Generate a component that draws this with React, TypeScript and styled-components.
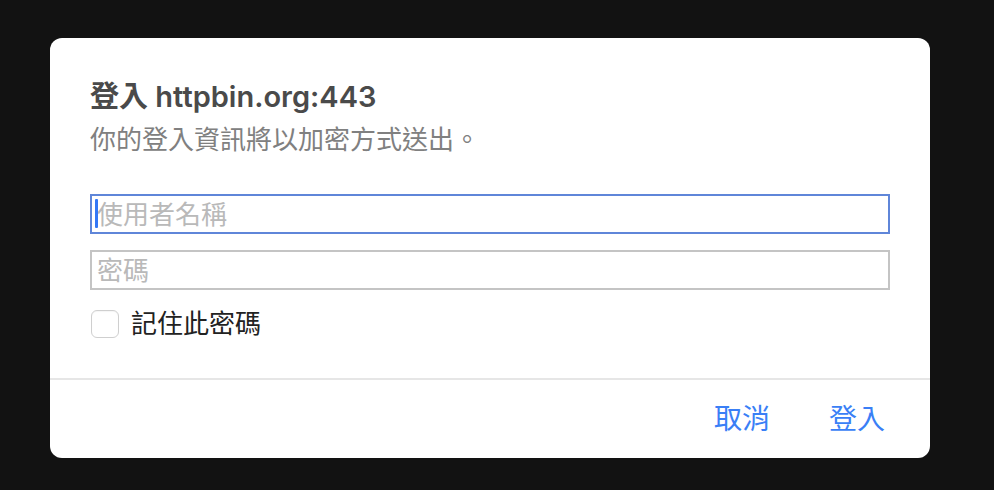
import styled, { createGlobalStyle } from 'styled-components'

const GlobalStyle = createGlobalStyle`
  html, body {
    margin: 0;
    padding: 0;
    background: #121212;
  }
  body {
    font-family: "Inter", "Noto Sans CJK TC", sans-serif;
  }
`

const Page = styled.div`
  width: 994px;
  height: 490px;
  padding: 38px 64px 0 50px;
  box-sizing: border-box;
  background: #121212;
`

const Dialog = styled.div`
  width: 880px;
  height: 420px;
  background: #fff;
  border-radius: 12px;
  display: flex;
  flex-direction: column;
  overflow: hidden;
`

const Body = styled.div`
  flex: 1;
  padding: 42px 40px 0 40px;
  display: flex;
  flex-direction: column;
`

const Title = styled.h1`
  margin: 0;
  font-family: "Inter", "Noto Sans CJK TC", sans-serif;
  font-size: 29px;
  line-height: 34px;
  font-weight: 600;
  color: #4a4a4a;
`

const Subtitle = styled.p`
  margin: 10px 0 0;
  font-size: 26px;
  line-height: 32px;
  font-weight: 400;
  color: #808080;
`

const Fields = styled.div`
  margin-top: 38px;
  display: flex;
  flex-direction: column;
  gap: 16px;
`

const FieldWrap = styled.div`
  position: relative;
`

const Field = styled.input<{ $active?: boolean }>`
  display: block;
  width: 100%;
  height: 40px;
  box-sizing: border-box;
  margin: 0;
  padding: 0 5px;
  border: 2px solid ${(p) => (p.$active ? '#5f86d9' : '#c4c4c4')};
  border-radius: 0;
  outline: none;
  font-family: "Inter", "Noto Sans CJK TC", sans-serif;
  font-size: 26px;
  color: #222;
  caret-color: transparent;
  background: #fff;

  &::placeholder {
    color: #b9b9b9;
  }
`

const Caret = styled.span`
  position: absolute;
  left: 5px;
  top: 5px;
  width: 3px;
  height: 29px;
  background: #3478f6;
  border-radius: 1px;
`

const Remember = styled.label`
  margin-top: 20px;
  display: flex;
  align-items: center;
  gap: 12px;
  font-size: 26px;
  line-height: 28px;
  color: #222;
`

const Box = styled.span`
  width: 28px;
  height: 28px;
  box-sizing: border-box;
  margin-left: 1px;
  border: 1px solid #cfcfcf;
  border-radius: 6px;
  background: #fff;
  box-shadow: inset 0 1px 1px rgba(0, 0, 0, 0.04);
`

const Footer = styled.div`
  height: 78px;
  border-top: 2px solid #e6e6e6;
  display: flex;
  align-items: center;
  justify-content: flex-end;
  gap: 59px;
  padding-right: 45px;
`

const Action = styled.button`
  border: none;
  background: none;
  padding: 0;
  font-family: "Inter", "Noto Sans CJK TC", sans-serif;
  font-size: 28px;
  line-height: 32px;
  color: #3a7ff6;
  cursor: pointer;
`

export default function App() {
  return (
    <>
      <GlobalStyle />
      <Page>
        <Dialog>
          <Body>
            <Title>登入 httpbin.org:443</Title>
            <Subtitle>你的登入資訊將以加密方式送出。</Subtitle>
            <Fields>
              <FieldWrap>
                <Field $active type="text" placeholder="使用者名稱" />
                <Caret />
              </FieldWrap>
              <FieldWrap>
                <Field type="password" placeholder="密碼" />
              </FieldWrap>
            </Fields>
            <Remember>
              <Box />
              記住此密碼
            </Remember>
          </Body>
          <Footer>
            <Action>取消</Action>
            <Action>登入</Action>
          </Footer>
        </Dialog>
      </Page>
    </>
  )
}
